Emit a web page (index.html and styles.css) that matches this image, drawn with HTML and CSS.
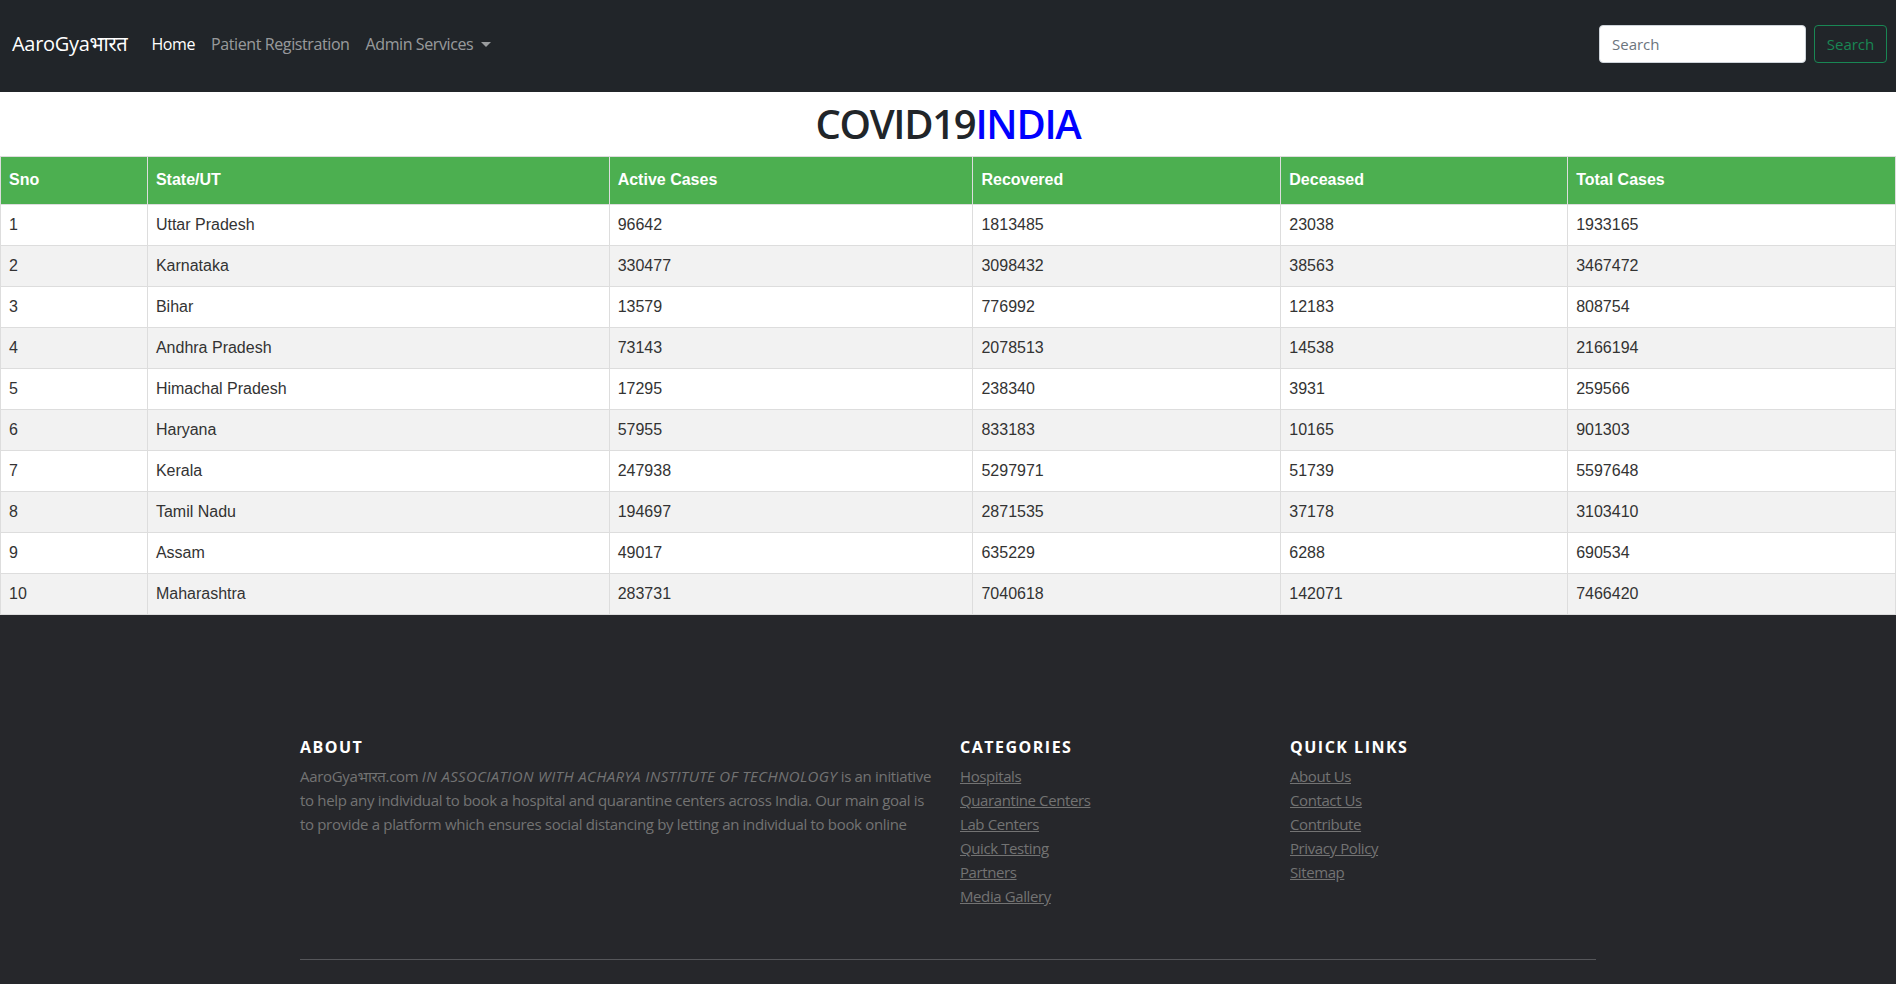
FILE: index.html
```html
<!DOCTYPE html>
<html lang="en">
<head>
<meta charset="utf-8">
<title>AaroGyaभारत - COVID19 India</title>
<link rel="stylesheet" href="styles.css">
</head>
<body>
<nav class="navbar">
  <a class="brand" href="#">AaroGyaभारत</a>
  <ul class="nav-links">
    <li><a class="nav-link active" href="#">Home</a></li>
    <li><a class="nav-link" href="#">Patient Registration</a></li>
    <li><a class="nav-link dropdown" href="#">Admin Services</a></li>
  </ul>
  <form class="search">
    <input class="search-input" type="search" placeholder="Search">
    <button class="search-btn" type="button">Search</button>
  </form>
</nav>

<h1 class="title">COVID19<span class="india">INDIA</span></h1>

<table class="cases">
  <colgroup>
    <col class="c-sno"><col class="c-state"><col class="c-active"><col class="c-rec"><col class="c-dec"><col class="c-total">
  </colgroup>
  <thead>
    <tr><th>Sno</th><th>State/UT</th><th>Active Cases</th><th>Recovered</th><th>Deceased</th><th>Total Cases</th></tr>
  </thead>
  <tbody>
    <tr><td>1</td><td>Uttar Pradesh</td><td>96642</td><td>1813485</td><td>23038</td><td>1933165</td></tr>
    <tr><td>2</td><td>Karnataka</td><td>330477</td><td>3098432</td><td>38563</td><td>3467472</td></tr>
    <tr><td>3</td><td>Bihar</td><td>13579</td><td>776992</td><td>12183</td><td>808754</td></tr>
    <tr><td>4</td><td>Andhra Pradesh</td><td>73143</td><td>2078513</td><td>14538</td><td>2166194</td></tr>
    <tr><td>5</td><td>Himachal Pradesh</td><td>17295</td><td>238340</td><td>3931</td><td>259566</td></tr>
    <tr><td>6</td><td>Haryana</td><td>57955</td><td>833183</td><td>10165</td><td>901303</td></tr>
    <tr><td>7</td><td>Kerala</td><td>247938</td><td>5297971</td><td>51739</td><td>5597648</td></tr>
    <tr><td>8</td><td>Tamil Nadu</td><td>194697</td><td>2871535</td><td>37178</td><td>3103410</td></tr>
    <tr><td>9</td><td>Assam</td><td>49017</td><td>635229</td><td>6288</td><td>690534</td></tr>
    <tr><td>10</td><td>Maharashtra</td><td>283731</td><td>7040618</td><td>142071</td><td>7466420</td></tr>
  </tbody>
</table>

<footer class="site-footer">
  <div class="container">
    <div class="row">
      <div class="col-about">
        <h6>About</h6>
        <p class="about-text">AaroGyaभारत.com <i class="assoc">IN ASSOCIATION WITH ACHARYA INSTITUTE OF TECHNOLOGY</i> is an initiative to help any individual to book a hospital and quarantine centers across India. Our main goal is to provide a platform which ensures social distancing by letting an individual to book online</p>
      </div>
      <div class="col-links">
        <h6>Categories</h6>
        <ul class="footer-links">
          <li><a href="#">Hospitals</a></li>
          <li><a href="#">Quarantine Centers</a></li>
          <li><a href="#">Lab Centers</a></li>
          <li><a href="#">Quick Testing</a></li>
          <li><a href="#">Partners</a></li>
          <li><a href="#">Media Gallery</a></li>
        </ul>
      </div>
      <div class="col-links">
        <h6>Quick Links</h6>
        <ul class="footer-links">
          <li><a href="#">About Us</a></li>
          <li><a href="#">Contact Us</a></li>
          <li><a href="#">Contribute</a></li>
          <li><a href="#">Privacy Policy</a></li>
          <li><a href="#">Sitemap</a></li>
        </ul>
      </div>
    </div>
    <hr class="rule">
  </div>
</footer>
</body>
</html>
```

FILE: styles.css
```css
* { box-sizing: border-box; }

body {
  margin: 0;
  font-family: "Open Sans", "Noto Sans", "Noto Sans Devanagari", sans-serif;
  background: #fff;
  color: #212529;
}

.navbar {
  display: flex;
  align-items: center;
  height: 92px;
  padding: 0 9px 5px 12px;
  background: #212529;
}

.brand {
  font-size: 20px;
  color: #fff;
  text-decoration: none;
  margin-right: 16px;
  letter-spacing: -0.3px;
}

.nav-links {
  display: flex;
  list-style: none;
  margin: 0;
  padding: 0;
  flex: 1;
}

.nav-link {
  display: block;
  padding: 8px 8px;
  font-size: 16px;
  color: rgba(255, 255, 255, 0.55);
  text-decoration: none;
  letter-spacing: -0.4px;
}

.nav-link.active { color: #fff; }

.dropdown::after {
  content: "";
  display: inline-block;
  margin-left: 8px;
  vertical-align: 3px;
  border-top: 5px solid;
  border-left: 5px solid transparent;
  border-right: 5px solid transparent;
}

.search {
  display: flex;
  align-items: center;
}

.search-input {
  width: 207px;
  height: 38px;
  margin-right: 8px;
  padding: 6px 12px;
  font-family: inherit;
  font-size: 15px;
  border: 1px solid #ced4da;
  border-radius: 4px;
  background: #fff;
  color: #212529;
}

.search-input::placeholder { color: #6c757d; }

.search-btn {
  width: 73px;
  height: 38px;
  padding: 0;
  font-family: inherit;
  font-size: 15px;
  color: #198754;
  background: transparent;
  border: 1px solid #198754;
  border-radius: 4px;
}

.title {
  margin: 8px 0 8px;
  text-align: center;
  font-size: 40px;
  font-weight: 600;
  line-height: 48px;
  color: #212529;
  letter-spacing: -1.3px;
}

.india { color: #0000ff; }

.cases {
  width: 100%;
  border-collapse: collapse;
  font-family: "Liberation Sans", Arial, sans-serif;
  font-size: 16px;
  color: #333;
}

.c-sno { width: 147px; }
.c-state { width: 462px; }
.c-active { width: 364px; }
.c-rec { width: 308px; }
.c-dec { width: 287px; }
.c-total { width: 328px; }

.cases th,
.cases td {
  text-align: left;
  border: 1px solid #ddd;
  padding: 8px 8px;
  line-height: 24px;
}

.cases th {
  background: #4caf50;
  color: #fff;
  font-weight: bold;
  padding-top: 11px;
  padding-bottom: 12px;
}

.cases tbody tr:nth-child(even) td { background: #f2f2f2; }

.site-footer {
  background: #26272b;
  padding: 118px 0 24px;
  font-size: 15px;
  line-height: 24px;
  color: #737373;
}

.container {
  width: 1320px;
  margin: 0 auto;
  padding: 0 12px;
}

.row {
  display: flex;
  margin: 0 -12px;
}

.col-about {
  width: 660px;
  padding: 0 12px;
}

.col-links {
  width: 330px;
  padding: 0 12px;
}

.site-footer h6 {
  margin: 5px 0 7px;
  font-size: 16px;
  line-height: 19px;
  font-weight: 700;
  color: #fff;
  text-transform: uppercase;
  letter-spacing: 1.5px;
}

.about-text {
  margin: 0;
  text-align: left;
  letter-spacing: -0.33px;
}

.assoc { letter-spacing: 0.35px; }

.footer-links {
  list-style: none;
  margin: 0;
  padding: 0;
}

.footer-links a {
  color: #737373;
  text-decoration: underline;
  letter-spacing: -0.4px;
}

.rule {
  margin: 51px 0 0;
  border: 0;
  border-top: 1px solid #55565a;
  height: 0;
}
```
